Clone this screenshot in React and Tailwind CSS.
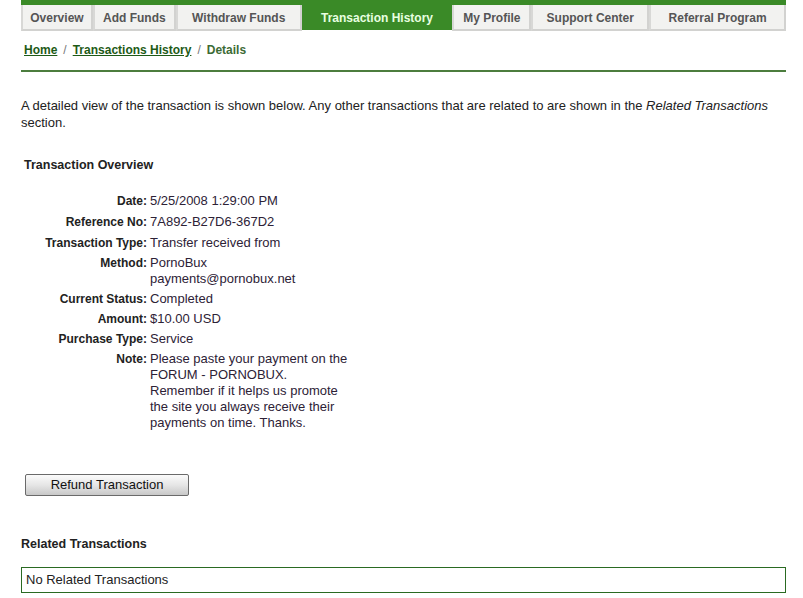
import React from 'react';

const tabs = [
  { label: 'Overview', w: 'w-[72px]' },
  { label: 'Add Funds', w: 'w-[83px]' },
  { label: 'Withdraw Funds', w: 'w-[126px]' },
  { label: 'Transaction History', w: 'w-[151px]', active: true },
  { label: 'My Profile', w: 'w-[79px]' },
  { label: 'Support Center', w: 'w-[118px]' },
  { label: 'Referral Program', w: 'w-[137px]' },
];

const details = [
  { label: 'Date:', value: ['5/25/2008 1:29:00 PM'] },
  { label: 'Reference No:', value: ['7A892-B27D6-367D2'] },
  { label: 'Transaction Type:', value: ['Transfer received from'] },
  { label: 'Method:', value: ['PornoBux', 'payments@pornobux.net'] },
  { label: 'Current Status:', value: ['Completed'] },
  { label: 'Amount:', value: ['$10.00 USD'] },
  { label: 'Purchase Type:', value: ['Service'] },
  {
    label: 'Note:',
    value: [
      'Please paste your payment on the',
      'FORUM - PORNOBUX.',
      'Remember if it helps us promote',
      'the site you always receive their',
      'payments on time. Thanks.',
    ],
  },
];

function TabBar() {
  return (
    <div className="flex border-t-[5px] border-[#3a8a27]">
      {tabs.map((t) =>
        t.active ? (
          <div
            key={t.label}
            className={`${t.w} h-[26px] -mt-[1px] pt-[1px] bg-[#3a8a27] text-[#e8ffe0] font-bold text-[12px] flex items-center justify-center`}
          >
            {t.label}
          </div>
        ) : (
          <div
            key={t.label}
            className={`${t.w} h-[26px] pt-[1px] bg-[#f2f2f0] border-2 border-t-0 border-[#d2d2d0] border-l-[#d8d8d6] text-[#555] font-bold text-[12px] flex items-center justify-center`}
          >
            {t.label}
          </div>
        )
      )}
    </div>
  );
}

export default function App() {
  return (
    <div
      className="bg-white w-[803px] h-[598px] overflow-hidden text-[13px] text-[#222]"
      style={{ fontFamily: '"Liberation Sans", Arial, sans-serif' }}
    >
      <div className="ml-[21px] w-[765px]">
        <TabBar />

        <div className="pt-[10px] pb-[11px] pl-[3px] text-[12px] font-bold text-[#3d6b35]">
          <a href="#" className="underline text-[#1e5a17]">Home</a>
          <span className="text-[#777] font-normal mx-[6px]">/</span>
          <a href="#" className="underline text-[#1e5a17]">Transactions History</a>
          <span className="text-[#777] font-normal mx-[6px]">/</span>
          <span>Details</span>
        </div>

        <div className="h-[2px] bg-[#4c7d3e]" />

        <p className="mt-[25px] leading-[17px] text-[#222]">
          A detailed view of the transaction is shown below. Any other transactions that are related to are shown in the{' '}
          <i>Related Transactions</i> section.
        </p>

        <h3 className="mt-[25px] ml-[3px] font-bold text-[12.5px] text-[#222]">Transaction Overview</h3>

        <div className="mt-[18px] flex flex-col gap-[4px]">
          {details.map((d, i) => (
            <div key={d.label} className={`flex leading-[16px] ${i === 1 || i === 2 ? 'pt-[1px]' : ''}`}>
              <div className="w-[129px] pr-[3px] text-right text-[12px] font-bold text-[#222]">{d.label}</div>
              <div className="text-[#2d2236]">
                {d.value.map((line) => (
                  <div key={line}>{line}</div>
                ))}
              </div>
            </div>
          ))}
        </div>

        <button className="mt-[43px] ml-[4px] w-[164px] h-[22px] rounded-[2px] border border-[#6a6a6a] bg-gradient-to-b from-[#fbfbfb] via-[#e6e6e6] to-[#c8c8c8] text-[13px] text-[#111]">
          Refund Transaction
        </button>

        <h3 className="mt-[39px] font-bold text-[12.5px] text-[#222]">Related Transactions</h3>

        <div className="mt-[13px] h-[26px] border border-[#2a6a22] pl-[4px] flex items-center text-[#222]">
          No Related Transactions
        </div>
      </div>
    </div>
  );
}
